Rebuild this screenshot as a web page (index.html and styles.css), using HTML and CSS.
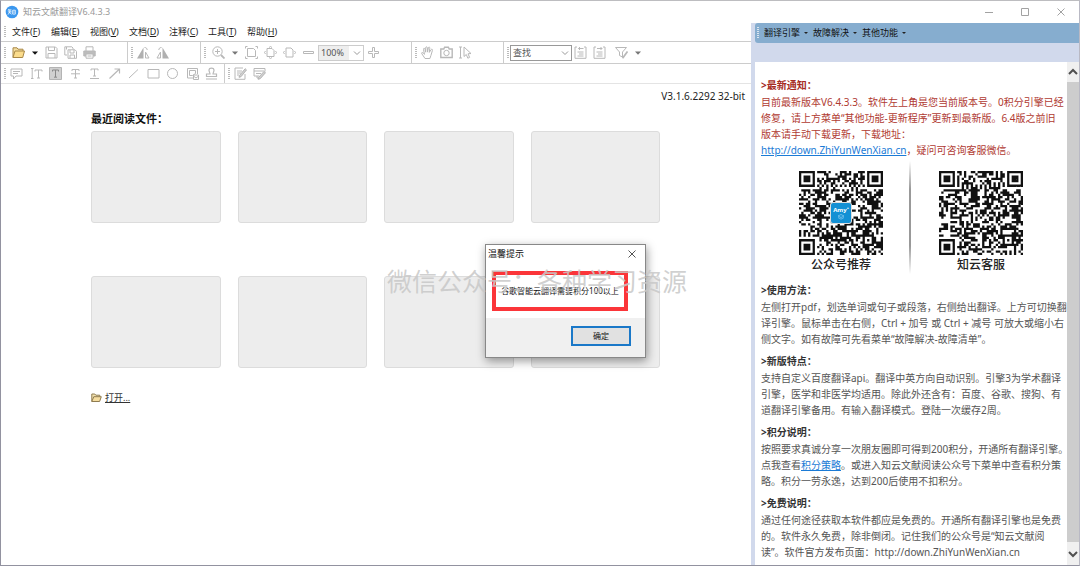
FILE: index.html
```html
<!DOCTYPE html>
<html lang="zh-CN">
<head>
<meta charset="utf-8">
<title>知云文献翻译V6.4.3.3</title>
<link rel="stylesheet" href="styles.css">
</head>
<body>
<div class="window">
  <header class="titlebar">
    <svg class="logo" viewBox="0 0 14 14" aria-hidden="true"><circle cx="7" cy="7" r="6.3" fill="#3b97ee"/><path d="M3.8 4.2 3.2 5.6M3.5 4.9h3M2.9 6.9h3.8M4.9 5v2L3 9.6M5 7.6l1.4 1.8M7.7 5.2h2.6v3.9H7.7zM9 6.3v1.5" fill="none" stroke="#fff" stroke-width=".8"/></svg>
    <h1 class="title">知云文献翻译V6.4.3.3</h1>
    <div class="controls">
      <button aria-label="最小化"><svg viewBox="0 0 10 10"><path d="M1 5.5h8"/></svg></button>
      <button aria-label="最大化"><svg viewBox="0 0 10 10"><path d="M1.5 1.5h7v7h-7z"/></svg></button>
      <button aria-label="关闭"><svg viewBox="0 0 10 10"><path d="m1.5 1.5 7 7m0-7-7 7"/></svg></button>
    </div>
  </header>

  <div class="body">
    <main class="reader">
      <nav class="menubar">
        <span class="grip"></span>
        <button>文件(<u>F</u>)</button><button>编辑(<u>E</u>)</button><button>视图(<u>V</u>)</button><button>文档(<u>D</u>)</button><button>注释(<u>C</u>)</button><button>工具(<u>T</u>)</button><button>帮助(<u>H</u>)</button>
      </nav>

      <div class="toolbar">
        <div class="group group-file">
          <span class="grip"></span>
          <button class="tool" aria-label="打开"><svg viewBox="0 0 13 13"><path d="M1 11.5V1.8h4l1 1.4h5v2" fill="#f5dfa0" stroke="#a88746"/><path d="M1 11.5 3 5h9.5l-1.8 6.5z" fill="#fbdc8c" stroke="#a88746"/></svg></button>
          <button class="caret dark" aria-label="打开选项"><svg viewBox="0 0 8 8"><path d="M1 2.5h6L4 5.8z"/></svg></button>
          <button class="tool" aria-label="保存"><svg viewBox="0 0 13 13"><path d="M1 1h9.500L12 2.500V12H1z"/><path d="M3.500 1v3.500h6V1M3 12V7.500h7V12"/></svg></button>
          <button class="tool" aria-label="全部保存"><svg viewBox="0 0 13 13"><path d="M3 9H.8V.8h7L9 2v1.500M2.500 1v2.500M4 3.800h7l1.500 1.500v7H4zM6 4v3h4V4M6 12V9h4.500v3"/></svg></button>
          <button class="tool" aria-label="打印"><svg viewBox="0 0 13 13"><path d="M3 5V.8h7V5"/><path d="M.8 5h11.4v5H.8z" fill="#bcbcbc"/><path d="M3 8h7v4.200H3z" fill="#fff"/><path d="M4.500 10h4"/></svg></button>
        </div>
        <div class="group group-flip">
          <span class="grip"></span>
          <button class="tool" aria-label="向左旋转"><svg viewBox="0 0 13 13"><path class="fill" d="M6.500 1.500v11H0z"/><path d="M8.500 6v6H12zM7.500 1.500c2 0 2.500 1 2.700 2.500"/></svg></button>
          <button class="tool" aria-label="向右旋转"><svg viewBox="0 0 13 13"><path class="fill" d="M6.500 1.500v11H13z"/><path d="M4.500 6v6H1zM5.500 1.500c-2 0-2.500 1-2.700 2.500"/></svg></button>
        </div>
        <div class="group group-zoom">
          <span class="grip"></span>
          <button class="tool" aria-label="放大工具"><svg viewBox="0 0 13 13"><circle cx="5.500" cy="5.500" r="4.700"/><path d="M9 9l3.500 3.500" stroke-width="1.800"/><path d="M3 5.500h5M5.500 3v5"/></svg></button>
          <button class="caret" aria-label="缩放选项"><svg viewBox="0 0 8 8"><path d="M1 2.500h6L4 5.800z"/></svg></button>
          <button class="tool" aria-label="实际大小"><svg viewBox="0 0 13 13"><path d="M2.500 2.500h6l2 2v6h-8z"/><path d="M.5 2.500V.5h2M10.500.5h2v2M12.500 10.500v2h-2M2.500 12.500h-2v-2"/></svg></button>
          <button class="tool" aria-label="适合页面"><svg viewBox="0 0 13 13"><path d="M3 2.500h5l2 2v6H3z"/><path d="M5 1.500 6.500.5 8 1.500M5 11.500l1.500 1 1.500-1M1.500 5l-1 1.500 1 1.500M11.500 5l1 1.500-1 1.500"/></svg></button>
          <button class="tool" aria-label="适合宽度"><svg viewBox="0 0 13 13"><path d="M3 2h5l2 2v7H3z"/><path d="M1.500 5l-1 1.500 1 1.500M11.500 5l1 1.500-1 1.500"/></svg></button>
          <button class="tool" aria-label="缩小"><svg viewBox="0 0 13 13"><path d="M1.500 5.500h10v2h-10z"/></svg></button>
          <span class="combo combo-zoom"><select aria-label="缩放比例"><option>100%</option></select><svg viewBox="0 0 8 8"><path d="m1 2.500 3 3 3-3"/></svg></span>
          <button class="tool" aria-label="放大"><svg viewBox="0 0 13 13"><path d="M5.500 1.500h2v4h4v2h-4v4h-2v-4h-4v-2h4z"/></svg></button>
        </div>
        <div class="group group-select">
          <span class="grip"></span>
          <button class="tool" aria-label="手形工具"><svg viewBox="0 0 13 13"><path d="M4 12.500 1 8C0 6.500 1.300 6 2.200 7L3.500 8.300 2.500 3.500C2.200 2 3.600 1.800 4 3.200l.7 3V1.800c0-1.400 1.500-1.400 1.600 0l.2 4.300L7.300 2c.3-1.400 1.700-1.100 1.500.2l-.5 4.200L10 3.800c.7-1.100 1.900-.5 1.400.7l-1.500 5-1 3z"/></svg></button>
          <button class="tool" aria-label="快照"><svg viewBox="0 0 13 13"><path stroke-width="1.400" d="M.8 3h3l.8-1.700h3.800L9.200 3h3v8.500H.8z"/><circle cx="6.500" cy="7" r="2.700"/></svg></button>
          <button class="tool" aria-label="选择文本"><svg viewBox="0 0 13 13"><path d="M0 1h3M0 12h3M1.500 1v11M5 1l7 6.500-3 .3 1.600 3.600-1.800.8-1.500-3.700L5 10.500z"/></svg></button>
        </div>
        <div class="group group-find">
          <span class="grip"></span>
          <span class="combo combo-find"><select aria-label="查找"><option>查找</option></select><svg viewBox="0 0 8 8"><path d="m1 2.500 3 3 3-3"/></svg></span>
          <button class="tool" aria-label="查找上一个"><svg viewBox="0 0 13 13"><path d="M3 1H1v11.300h11V1h-2M4.500 2.500h5M6 1 4.500 2.500 6 4M3.500 6h6M5 8h4.500M3.500 10h6"/></svg></button>
          <button class="tool" aria-label="查找下一个"><svg viewBox="0 0 13 13"><path d="M3 1H1v11.300h11V1h-2M4 2.500h5M7.500 1 9 2.500 7.500 4M3.500 6h6M5 8h4.500M3.500 10h6"/></svg></button>
          <button class="tool tool-filter" aria-label="筛选"><svg viewBox="0 0 13 13"><path d="M.5 1.500h11L7.500 6v5l-3-1.500V6z"/><path d="M12.500 5.500 8.500 11l-1 1.300" stroke-width="1.800"/></svg></button>
          <button class="caret" aria-label="筛选选项"><svg viewBox="0 0 8 8"><path d="M1 2.500h6L4 5.800z"/></svg></button>
        </div>
      </div>

      <div class="toolbar toolbar-notes">
        <div class="group group-notes">
          <span class="grip"></span>
          <button class="tool" aria-label="附注"><svg viewBox="0 0 13 13"><path d="M1 2h11v7H6l-2.500 3V9H1zM3 4.500h7M3 6.500h5"/></svg></button>
          <button class="tool" aria-label="打字机"><svg viewBox="0 0 13 13"><path d="M1 1.500h2.500M1 11.500h2.500M2.200 1.500v10M5 4.500V3h7v1.500M8.500 3v8M7 11h3"/></svg></button>
          <button class="tool" aria-label="高亮"><svg viewBox="0 0 13 13"><path class="hl" d="M.5.500h12v12H.5z"/><path class="ink" d="M3.500 4.500V3h6v1.500M6.500 3v7M5 10.200h3"/></svg></button>
          <button class="tool" aria-label="删除线"><svg viewBox="0 0 13 13"><path d="M3 4V2.500h7V4M6.500 2.500v8.500M5 11h3M2 6.800h9"/></svg></button>
          <button class="tool" aria-label="下划线"><svg viewBox="0 0 13 13"><path d="M3 3.500V2h7v1.500M6.500 2v7M5 9h3M2 11.500h9"/></svg></button>
          <button class="tool" aria-label="箭头"><svg viewBox="0 0 13 13"><path stroke-width="1.200" d="M1.500 11.500l10-9.500M6.500 2h5v4.500"/></svg></button>
          <button class="tool" aria-label="直线"><svg viewBox="0 0 13 13"><path d="M2 11 11 2.500"/></svg></button>
          <button class="tool" aria-label="矩形"><svg viewBox="0 0 13 13"><path d="M1 2.500h11v8.500H1z"/></svg></button>
          <button class="tool" aria-label="椭圆"><svg viewBox="0 0 13 13"><circle cx="6.500" cy="6.500" r="5"/></svg></button>
          <button class="tool" aria-label="图像"><svg viewBox="0 0 13 13"><path d="M7 11H1.500V1.500h10V7M3.500 3.500h6v3l-3 2h-3zM7.500 8h5v4.500h-5zM8 9.500l2 1.500 2-1.500"/></svg></button>
          <button class="tool" aria-label="图章"><svg viewBox="0 0 13 13"><path stroke-width="1.200" d="M5 7c0-1.500-1.200-2.500-1-4 .3-2.600 4.700-2.600 5 0 .2 1.500-1 2.500-1 4h3.500v2.500h-10V7zM1 12h11"/></svg></button>
        </div>
        <div class="group group-edit">
          <span class="grip"></span>
          <button class="tool" aria-label="编辑内容"><svg viewBox="0 0 13 13"><path d="M11 7v5.300H1V1h8M3 4h5M3 6h4M3 8h2"/><path class="hl" d="m5.500 8.500 5.700-6.800 1.300 1.200L7 9.700l-2 .6z"/></svg></button>
          <button class="tool" aria-label="编辑表单"><svg viewBox="0 0 13 13"><path d="M6 9H1V1.500h11v3M1 4h10M3 6.500h5M4 9v2h2"/><path class="hl" d="m5.500 10.500 5.500-6 1.500 1.200-5.300 6-2 .6z"/></svg></button>
        </div>
      </div>

      <section class="start">
        <p class="version">V3.1.6.2292 32-bit</p>
        <h2 class="recent-title">最近阅读文件：</h2>
        <div class="recent">
          <div class="card"></div><div class="card"></div><div class="card"></div><div class="card"></div>
          <div class="card"></div><div class="card"></div><div class="card"></div><div class="card"></div>
        </div>
        <a class="open" href="#open"><svg viewBox="0 0 11 10" aria-hidden="true"><path d="M.8 8.500V1h3l1 1.200h4v1.500" fill="#f2e2b0" stroke="#8f7c50"/><path d="M.8 8.500 2.800 3.700h7.500L8.600 8.500z" fill="#f5dda0" stroke="#8f7c50"/></svg><span>打开...</span></a>
      </section>
    </main>

    <aside class="side">
      <nav class="side-menu">
        <span class="grip"></span>
        <button>翻译引擎<i></i></button><button>故障解决<i></i></button><button>其他功能<i></i></button>
      </nav>
      <div class="side-view">
        <article class="notes">
          <section class="notice">
            <h3>&gt;最新通知：</h3>
            <p>目前最新版本V6.4.3.3。软件左上角是您当前版本号。0积分引擎已经<br>修复，请上方菜单“其他功能-更新程序”更新到最新版。6.4版之前旧<br>版本请手动下载更新，下载地址：<br><a href="http://down.ZhiYunWenXian.cn">http://down.ZhiYunWenXian.cn</a>，疑问可咨询客服微信。</p>
          </section>
          <div class="codes">
            <figure><div class="code"><svg class="qr" data-seed="5" role="img" aria-label="公众号二维码"></svg><span class="badge"><b>Amy⁺</b><svg viewBox="0 0 8 6"><path d="M4 .5 7 2 4 3.500 1 2zM1 3.500 4 5.200l3-1.700"/></svg></span></div><figcaption>公众号推荐</figcaption></figure>
            <span class="divider"></span>
            <figure><div class="code"><svg class="qr" data-seed="23" role="img" aria-label="客服二维码"></svg></div><figcaption>知云客服</figcaption></figure>
          </div>
          <section>
            <h3>&gt;使用方法：</h3>
            <p>左侧打开pdf，划选单词或句子或段落，右侧给出翻译。上方可切换翻<br>译引擎。鼠标单击在右侧，Ctrl + 加号 或 Ctrl + 减号 可放大或缩小右<br>侧文字。如有故障可先看菜单“故障解决-故障清单”。</p>
          </section>
          <section>
            <h3>&gt;新版特点：</h3>
            <p>支持自定义百度翻译api。翻译中英方向自动识别。引擎3为学术翻译<br>引擎，医学和非医学均适用。除此外还含有：百度、谷歌、搜狗、有<br>道翻译引擎备用。有输入翻译模式。登陆一次缓存2周。</p>
          </section>
          <section>
            <h3>&gt;积分说明：</h3>
            <p>按照要求真诚分享一次朋友圈即可得到200积分，开通所有翻译引擎。<br>点我查看<a href="#points">积分策略</a>。或进入知云文献阅读公众号下菜单中查看积分策<br>略。积分一劳永逸，达到200后使用不扣积分。</p>
          </section>
          <section>
            <h3>&gt;免费说明：</h3>
            <p>通过任何途径获取本软件都应是免费的。开通所有翻译引擎也是免费<br>的。软件永久免费，除非倒闭。记住我们的公众号是“知云文献阅<br>读”。软件官方发布页面：http://down.ZhiYunWenXian.cn</p>
          </section>
        </article>
        <div class="scrollbar">
          <button aria-label="向上滚动"><svg viewBox="0 0 12 12"><path d="m2 8 4-4 4 4"/></svg></button>
          <span class="thumb"></span>
          <button aria-label="向下滚动"><svg viewBox="0 0 12 12"><path d="m2 4 4 4 4-4"/></svg></button>
        </div>
      </div>
    </aside>
  </div>

  <div class="dialog" role="dialog" aria-labelledby="dialog-title">
    <div class="dialog-head"><h2 id="dialog-title">温馨提示</h2><button aria-label="关闭提示"><svg viewBox="0 0 10 10"><path d="m1.500 1.500 7 7m0-7-7 7"/></svg></button></div>
    <p class="dialog-text">谷歌智能云翻译需要积分100以上</p>
    <div class="dialog-foot"><button class="ok">确定</button></div>
  </div>
  <div class="watermark">微信公众号：各种学习资源</div>
</div>
<script src="qr.js"></script>
</body>
</html>
```

FILE: styles.css
```css
* { box-sizing: border-box; }

body {
  margin: 0;
  background: #fff;
  color: #222;
  font: 9px/14px "Noto Sans", "Noto Sans CJK SC", sans-serif;
}

h1, h2, h3, p, figure { margin: 0; font-weight: 400; font-size: inherit; }

button {
  padding: 0;
  border: 0;
  background: none;
  color: inherit;
  font: inherit;
}

svg { display: block; }

.window {
  position: relative;
  display: flex;
  flex-direction: column;
  height: 100vh;
  overflow: hidden;
  border: 1px solid #9292a0;
  border-top-color: #bdbdc0;
  border-right-color: #b9b9c4;
}

/* Title bar */
.titlebar {
  display: flex;
  align-items: center;
  height: 22px;
  padding: 0 8px 0 4px;
  color: #999;
}
.logo { width: 14px; height: 14px; }
.title { margin-left: 4px; }
.controls { display: flex; gap: 26px; margin-left: auto; padding-right: 5px; }
.controls svg, .dialog-head svg { width: 10px; height: 10px; fill: none; stroke: #a2a2a2; }

.body { display: flex; flex: 1; min-height: 0; }
.reader { flex: 1; min-width: 0; }

.grip {
  flex: none;
  width: 2px;
  height: 12px;
  background: repeating-linear-gradient(#bbb 0 1px, transparent 1px 2px);
}

/* Menus */
.menubar {
  display: flex;
  align-items: center;
  gap: 10px;
  height: 18px;
  padding-left: 3px;
}
.menubar .grip { margin-right: -4px; }
.menubar button { min-width: 29px; text-align: left; }

/* Toolbars */
.toolbar {
  display: flex;
  height: 23px;
  border-top: 1px solid #ccc;
  border-bottom: 1px solid #ccc;
}
.toolbar-notes { height: 20px; border-top: 0; border-bottom-color: #e4e4e4; }
.group {
  display: flex;
  align-items: center;
  gap: 6px;
  padding-left: 3px;
  border-right: 1px solid #ccc;
}
.group .grip { margin-right: -2px; }
.group-file { width: 127px; }
.group-file .grip { margin-right: 0; }
.group-flip { width: 73px; }
.group-zoom { width: 211px; }
.group-zoom .grip { margin-right: 0; }
.group-select { width: 92px; }
.group-find { border-right: 0; }
.group-notes { width: 224px; justify-content: space-between; padding-right: 6px; }
.group-edit { border-right: 0; }
.tool { flex: none; }
.tool svg { width: 13px; height: 13px; fill: none; stroke: #b8b8b8; }
.tool .fill { fill: #b0b0b0; stroke: none; }
.tool .hl { fill: #d0d0d0; stroke: #b4b4b4; }
.tool .ink { stroke: #888; }
.tool-filter { margin-left: 3px; }
.caret svg { width: 8px; height: 8px; fill: #777; }
.caret.dark svg { fill: #111; }

.combo { position: relative; }
.combo select {
  display: block;
  width: 100%;
  height: 16px;
  padding: 0 0 0 2px;
  border: 1px solid #ccc;
  border-radius: 0;
  background: #fff;
  color: #555;
  font: inherit;
  appearance: none;
}
.combo svg {
  position: absolute;
  top: 4px;
  right: 3px;
  width: 8px;
  height: 8px;
  fill: none;
  stroke: #999;
  pointer-events: none;
}
.combo-zoom { width: 46px; margin: 0 -3px; }
.combo-zoom select { background: linear-gradient(90deg, #eee 30px, #fff 30px); }
.combo-find { width: 62px; margin: 0 -4px 0 -3px; }
.combo-find select { border-color: #999; }

/* Start page */
.start { padding: 5px 91px 0 90px; }
.version { margin-right: -85px; font-size: 10px; text-align: right; }
.recent-title {
  margin-top: 8px;
  color: #111;
  font-size: 11px;
  font-weight: 700;
  line-height: 16px;
}
.recent {
  display: grid;
  grid-template-columns: repeat(4, 1fr);
  gap: 53px 17px;
  margin-top: 4px;
}
.card {
  height: 92px;
  border: 1px solid #dcdcdc;
  border-radius: 3px;
  background: #ededed;
}
.open {
  display: inline-flex;
  align-items: center;
  gap: 3px;
  margin-top: 23px;
  color: #333;
  text-decoration: none;
}
.open svg { width: 11px; height: 10px; }
.open span { text-decoration: underline; }

/* Side panel */
.side {
  display: flex;
  flex-direction: column;
  width: 328px;
  padding-left: 4px;
  background: #d1d9ec;
}
.side-menu {
  display: flex;
  align-items: center;
  gap: 5px;
  height: 20px;
  margin-bottom: 19px;
  padding-left: 2px;
  border-radius: 3px 0 0 3px;
  background: #86adcf;
  color: #111;
}
.side-menu .grip { background: repeating-linear-gradient(#dce6f0 0 1px, transparent 1px 2px); }
.side-menu button { display: flex; align-items: center; gap: 4px; }
.side-menu i {
  border: 2px solid transparent;
  border-top-color: #222;
  border-bottom: 0;
}
.side-view { display: flex; flex: 1; min-height: 0; background: #fff; }

.notes {
  flex: 1;
  min-width: 0;
  padding: 15px 0 0 6px;
  color: #555;
  font-size: 10px;
  line-height: 16px;
  white-space: nowrap;
}
.notes section { margin-bottom: 6px; }
.notes h3 { color: #333; font-weight: 700; line-height: 17px; }
.notes a { color: #1b7bd6; }
.notes .notice { margin-bottom: 13px; color: #b03a32; }
.notice h3 { color: #a52a22; }

.codes { display: flex; margin: 0 0 8px 38px; }
.code { display: grid; place-items: center; }
.qr, .badge { grid-area: 1 / 1; }
.qr { width: 84px; height: 84px; fill: #111; }
.codes figcaption {
  padding-top: 1px;
  color: #222;
  font-size: 12px;
  font-weight: 500;
  line-height: 18px;
  text-align: center;
}
.divider {
  width: 2px;
  margin: -10px 28px 0 26px;
  background: linear-gradient(transparent, #999 25%, #999 75%, transparent);
}
.badge {
  display: flex;
  flex-direction: column;
  align-items: center;
  width: 22px;
  height: 22px;
  padding-top: 3px;
  border: 1px solid #ddd;
  border-radius: 3px;
  background: #1390d4;
  color: #fff;
  font-size: 6px;
  line-height: 8px;
}
.badge svg { width: 8px; height: 6px; fill: none; stroke: #8fd0f2; stroke-width: 0.7; }

.scrollbar {
  display: flex;
  flex-direction: column;
  width: 12px;
  background: #f0f0f0;
}
.scrollbar button { height: 20px; }
.scrollbar button:last-child { height: 23px; }
.scrollbar svg { width: 12px; height: 12px; margin: auto; fill: none; stroke: #505050; stroke-width: 2; }
.thumb { flex: 1; background: #cdcdcd; }

/* Message box floating over the window */
.dialog {
  position: absolute;
  top: 243px;
  left: 484px;
  width: 161px;
  border: 1px solid #888;
  background: #fff;
  box-shadow: 1px 3px 9px rgba(0, 0, 0, 0.4);
  color: #111;
}
.dialog-head {
  display: flex;
  align-items: center;
  justify-content: space-between;
  height: 18px;
  padding: 0 8px 0 2px;
}
.dialog-head svg { stroke: #555; }
.dialog-text {
  margin: 8px 17px 7px 6px;
  padding: 10px 0;
  border: 4px solid #fb3539;
  font-size: 8px;
  line-height: 12px;
  text-align: center;
  white-space: nowrap;
}
.dialog-foot {
  display: flex;
  justify-content: flex-end;
  padding: 8px 14px 11px;
  background: #f0f0f0;
}
.ok {
  width: 60px;
  height: 20px;
  border: 2px solid #1a78c8;
  background: #e1e1e1;
  font-size: 8px;
}

.watermark {
  position: absolute;
  top: 261px;
  left: 386px;
  color: rgba(200, 200, 200, 0.85);
  font: 25px/36px "Noto Sans CJK TC", sans-serif;
  white-space: nowrap;
  pointer-events: none;
}
```

FILE: qr.js
```js
// Draws 37-module codes with three finder squares and one alignment square.
const SIZE = 37;

function ring(x, y, cx, cy) {
  return Math.max(Math.abs(x - cx), Math.abs(y - cy));
}

function drawCode(svg) {
  let state = Number(svg.dataset.seed) * 7919;
  const next = () => {
    state = (state * 1103515245 + 12345) % 2147483648;
    return state / 2147483648;
  };
  let path = "";
  for (let y = 0; y < SIZE; y++) {
    for (let x = 0; x < SIZE; x++) {
      let on = next() < 0.54;
      if (x === 6 || y === 6) on = (x + y) % 2 === 0;
      for (const [cx, cy] of [[3, 3], [33, 3], [3, 33]]) {
        const r = ring(x, y, cx, cy);
        if (r <= 4) on = r !== 2 && r !== 4;
      }
      const r = ring(x, y, 30, 30);
      if (r <= 2) on = r !== 1;
      if (on) path += `M${x} ${y}h1v1h-1z`;
    }
  }
  svg.setAttribute("viewBox", `0 0 ${SIZE} ${SIZE}`);
  const shape = document.createElementNS("http://www.w3.org/2000/svg", "path");
  shape.setAttribute("d", path);
  svg.append(shape);
}

document.querySelectorAll(".qr").forEach(drawCode);
```
